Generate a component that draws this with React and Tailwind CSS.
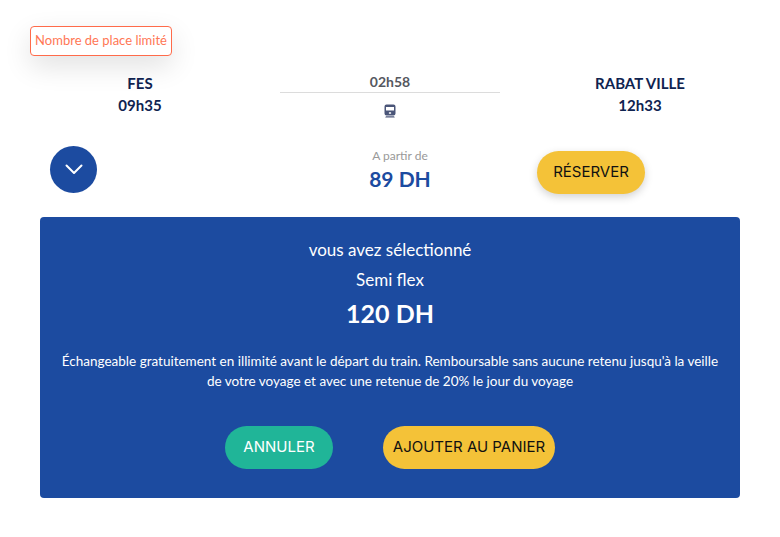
function TrainIcon() {
  return (
    <svg width="12" height="14" viewBox="0 0 12 14" className="text-[#4a5578]">
      <path fill="currentColor" fillRule="evenodd" d="M2.5 0.5h7A2 2 0 0 1 11.5 2.5v7a2 2 0 0 1-2 2h-7a2 2 0 0 1-2-2v-7a2 2 0 0 1 2-2ZM2 3v3.4h8V3ZM4.9 8.2v1.6h2.2V8.2Z" />
      <path fill="currentColor" d="M2 12.2h8l.8 1.3H1.2Z" />
    </svg>
  );
}

export default function App() {
  return (
    <div className="w-[780px] h-[537px] bg-white px-10 pt-[26px] font-['Lato',sans-serif] text-[#0f2350]">
      <div className="-ml-2.5 w-[142px] h-[30px] flex items-center justify-center bg-white border border-[#ff6b4a] rounded-[4px] text-[#ff7755] text-[13px] shadow-[0_10px_28px_rgba(0,0,0,0.12)]">
        Nombre de place limité
      </div>

      <div className="grid grid-cols-[200px_220px_200px] gap-10 mt-4 h-[76px]">
        <div className="text-center font-bold text-[15px] leading-[22px]">
          <div>FES</div>
          <div>09h35</div>
        </div>
        <div className="flex flex-col items-center">
          <div className="w-full h-[21px] border-b border-[#dcdcdc] text-center text-[14px] leading-[20px] font-bold text-[#55585f]">02h58</div>
          <div className="mt-[11px]"><TrainIcon /></div>
        </div>
        <div className="text-center font-bold text-[15px] leading-[22px]">
          <div>RABAT VILLE</div>
          <div>12h33</div>
        </div>
      </div>

      <div className="relative flex items-start h-[71px] -mt-[2px]">
        <div className="ml-2.5 w-[47px] h-[47px] rounded-full bg-[#1c4ba0] flex items-center justify-center">
          <svg width="18" height="11" viewBox="0 0 18 11" fill="none" stroke="white" strokeWidth="2" strokeLinecap="round" strokeLinejoin="round">
            <path d="M1.5 1.5 9 9l7.5-7.5" />
          </svg>
        </div>
        <div className="ml-[253px] w-[100px] text-center pt-[2px]">
          <div className="text-[12px] leading-4 text-[#999]">A partir de</div>
          <div className="text-[21px] leading-7 mt-[1px] font-bold text-[#1c4ba0]">89 DH</div>
        </div>
        <button className="ml-[87px] mt-[5px] w-[108px] h-[43px] rounded-[22px] bg-[#f4c238] text-[#111] text-[15px] font-['Inter',sans-serif] shadow-[0_3px_8px_rgba(0,0,0,0.18)]">
          RÉSERVER
        </button>
      </div>

      <div className="h-[281px] bg-[#1c4ba0] rounded-[4px] text-white text-center pt-[21px]">
        <div className="text-[17px] leading-6">vous avez sélectionné</div>
        <div className="text-[17px] leading-6 mt-[6px]">Semi flex</div>
        <div className="text-[25px] leading-8 mt-[5px] font-bold">120 DH</div>
        <p className="mt-[22px] mx-auto w-[660px] text-[13.5px] leading-[20px]">
          Échangeable gratuitement en illimité avant le départ du train. Remboursable sans aucune retenu jusqu'à la veille de votre voyage et avec une retenue de 20% le jour du voyage
        </p>
        <div className="mt-[35px] flex justify-center gap-[50px] font-['Inter',sans-serif] text-[15px]">
          <button className="w-[108px] h-[43px] rounded-[22px] bg-[#20b598] text-white">ANNULER</button>
          <button className="w-[172px] h-[43px] rounded-[22px] bg-[#f4c238] text-[#111]">AJOUTER AU PANIER</button>
        </div>
      </div>
    </div>
  );
}
